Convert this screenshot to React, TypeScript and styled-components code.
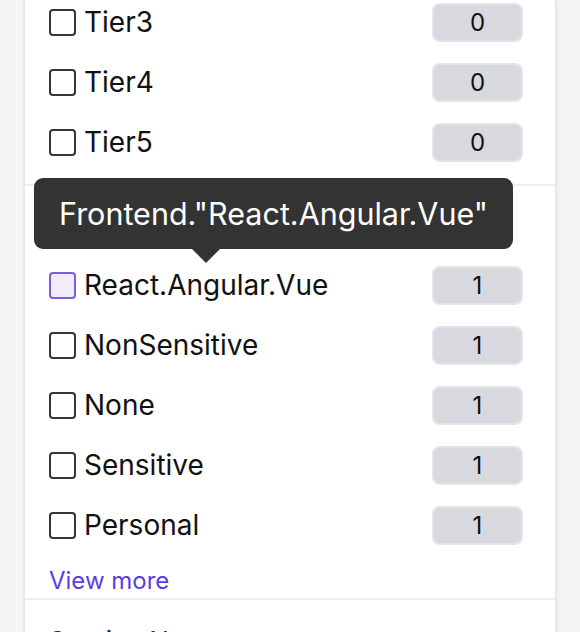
import React from "react";
import styled, { createGlobalStyle } from "styled-components";

const GlobalStyle = createGlobalStyle`
  html, body {
    margin: 0;
    padding: 0;
    background: #f4f5f7;
    font-family: Inter, "Noto Sans", "Liberation Sans", sans-serif;
    color: #141414;
    overflow: hidden;
  }
`;

type Facet = { label: string; count: number; active?: boolean };

const tiers: Facet[] = [
  { label: "Tier3", count: 0 },
  { label: "Tier4", count: 0 },
  { label: "Tier5", count: 0 },
];

const frontend: Facet[] = [
  { label: "React.Angular.Vue", count: 1, active: true },
  { label: "NonSensitive", count: 1 },
  { label: "None", count: 1 },
  { label: "Sensitive", count: 1 },
  { label: "Personal", count: 1 },
];

const FacetRow = ({ facet }: { facet: Facet }) => (
  <Row>
    <Label>
      <Box $active={facet.active} />
      <span>{facet.label}</span>
    </Label>
    <Count>{facet.count}</Count>
  </Row>
);

const App = () => {
  return (
    <>
      <GlobalStyle />
      <Page>
        <Card>
          <Section>
            <Rows>
              {tiers.map((f) => (
                <FacetRow key={f.label} facet={f} />
              ))}
            </Rows>
          </Section>
          <Section $padTop={20}>
            <Header>Frontend</Header>
            <Rows>
              {frontend.map((f) => (
                <FacetRow key={f.label} facet={f} />
              ))}
              <ViewMore>View more</ViewMore>
            </Rows>
            <Tooltip>Frontend."React.Angular.Vue"</Tooltip>
          </Section>
          <Section $padTop={25}>
            <Header>Service Name</Header>
          </Section>
        </Card>
      </Page>
    </>
  );
};

export default App;

const Page = styled.div`
  padding: 0 23px;
  height: 632px;
  overflow: hidden;
`;

const Card = styled.div`
  background: #ffffff;
  border-left: 2px solid #e6e8ec;
  border-right: 2px solid #e6e8ec;
  box-shadow: 2px 0 6px rgba(0, 0, 0, 0.03);
`;

const Section = styled.div<{ $padTop?: number }>`
  position: relative;
  padding: ${(p) => p.$padTop ?? 0}px 32px 0 24px;
  & + & {
    border-top: 2px solid #eceef2;
  }
  &:first-child {
    padding-bottom: 20px;
  }
`;

const Header = styled.div`
  font-size: 26px;
  line-height: 32px;
  color: #2b2b2b;
  margin-bottom: 25px;
`;

const Rows = styled.div`
  display: flex;
  flex-direction: column;
  gap: 16px;
`;

const Row = styled.div`
  display: flex;
  align-items: center;
  justify-content: space-between;
  height: 44px;
`;

const Label = styled.label`
  display: flex;
  align-items: center;
  gap: 8px;
  font-size: 28px;
  color: #111111;
`;

const Box = styled.span<{ $active?: boolean }>`
  box-sizing: border-box;
  width: 27px;
  height: 27px;
  border-radius: 4px;
  border: 2px solid ${(p) => (p.$active ? "#7c5ce6" : "#363636")};
  background: ${(p) => (p.$active ? "#f0edfc" : "#ffffff")};
`;

const Count = styled.span`
  box-sizing: border-box;
  width: 91px;
  height: 39px;
  display: flex;
  align-items: center;
  justify-content: center;
  border-radius: 8px;
  background: #d8d9de;
  border: 2px solid #e3e4e8;
  font-size: 24px;
  color: #111111;
`;

const ViewMore = styled.a`
  display: block;
  height: 35px;
  line-height: 35px;
  font-size: 24px;
  color: #5b3ee0;
  cursor: pointer;
`;

const Tooltip = styled.div`
  position: absolute;
  left: 9px;
  top: -8px;
  width: 479px;
  height: 71px;
  display: flex;
  align-items: center;
  justify-content: center;
  background: #333333;
  color: #ffffff;
  border-radius: 9px;
  font-size: 30.5px;
  &::after {
    content: "";
    position: absolute;
    left: 158px;
    bottom: -14px;
    border-left: 14px solid transparent;
    border-right: 14px solid transparent;
    border-top: 14px solid #333333;
  }
`;
